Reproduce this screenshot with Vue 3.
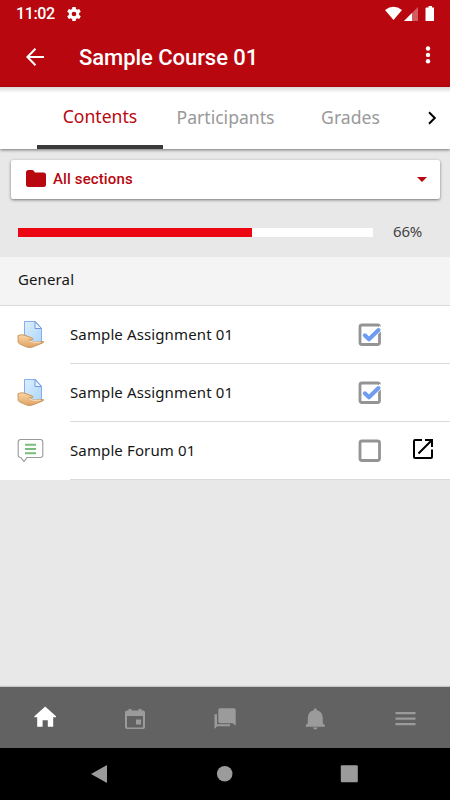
<template>
  <div class="screen">
    <header class="app-header">
      <div class="status-bar">
        <span class="clock">11:02</span>
        <svg class="gear" width="16" height="16" viewBox="0 0 24 24">
          <path fill="#fff" fill-rule="evenodd" d="M19.600 13.500a7.500 7.500 0 0 0 0-3l2.600-1.700-2.400-4.300-3 1.200a8 8 0 0 0-1.900-1.100L14.500 1.500h-5l-.4 3.100a8 8 0 0 0-1.900 1.100l-3-1.200-2.400 4.300 2.600 1.700a7.500 7.500 0 0 0 0 3l-2.600 1.700 2.400 4.300 3-1.200a8 8 0 0 0 1.900 1.100l.4 3.100h5l.4-3.100a8 8 0 0 0 1.900-1.100l3 1.200 2.400-4.300zM12 15.500a3.500 3.500 0 1 1 0-7 3.500 3.500 0 0 1 0 7z" />
        </svg>
        <svg class="signals" width="50" height="16" viewBox="0 0 50 16">
          <path fill="#fff" d="M0 4Q8.500-2.500 17 4L8.500 14z" />
          <path fill="#fff" opacity=".35" d="M33 1v14H19z" />
          <path fill="#fff" d="M27 7v8h-8z" />
          <path fill="#fff" d="M41.500 1.500h2V0H47v1.500h2V15h-8.500V2.500q0-1 1-1z" />
        </svg>
      </div>
      <div class="toolbar">
        <svg width="18" height="18" viewBox="0 0 18 18" fill="none" stroke="#fff" stroke-width="2">
          <path d="M9.500.7 1.400 9l8.100 8.300M1.500 9H18" />
        </svg>
        <h1>Sample Course 01</h1>
        <svg class="more" width="6" height="18" viewBox="0 0 6 18" fill="#fff">
          <circle cx="3" cy="2.500" r="2.200" />
          <circle cx="3" cy="8.900" r="2.200" />
          <circle cx="3" cy="15.300" r="2.200" />
        </svg>
      </div>
    </header>

    <nav class="tabs">
      <button
        v-for="tab in tabs"
        :key="tab"
        class="tab"
        :class="{ active: tab === activeTab }"
        @click="activeTab = tab"
      >{{ tab }}</button>
      <svg class="next" width="10" height="14" viewBox="0 0 10 14" fill="none" stroke="#000" stroke-width="2">
        <path d="m2 1.200 5.800 5.800L2 12.800" />
      </svg>
    </nav>

    <main>
      <div class="section-picker">
        <svg class="folder" width="20" height="17" viewBox="0 0 20 17">
          <path fill="#b90710" d="M0 2.500Q0 0 2.500 0H6q1.200 0 2 1l.8 1.500H17.500Q20 2.500 20 5v9.500Q20 17 17.500 17h-15Q0 17 0 14.500z" />
        </svg>
        <span>All sections</span>
        <svg class="caret" width="10" height="5" viewBox="0 0 10 5">
          <path fill="#b90710" d="M0 0h10L5 5z" />
        </svg>
      </div>

      <div class="progress">
        <div class="progress-track">
          <div class="progress-value" :style="{ width: progress + '%' }"></div>
        </div>
        <span>{{ progress }}%</span>
      </div>

      <h2>General</h2>

      <div v-for="(item, i) in items" :key="i" class="item">
        <svg v-if="item.type === 'assign'" class="item-icon" width="27" height="28" viewBox="0 0 27 28">
          <defs>
            <linearGradient id="paper" x2="1" y2="1">
              <stop stop-color="#dcefff" />
              <stop offset="1" stop-color="#add6fa" />
            </linearGradient>
            <linearGradient id="hand" x2="0" y2="1">
              <stop stop-color="#fbd7a5" />
              <stop offset="1" stop-color="#dfa264" />
            </linearGradient>
          </defs>
          <path fill="url(#paper)" stroke="#85adef" d="M7.500 1.500h11l6 7V23h-17z" />
          <path fill="#e7f4ff" stroke="#7198e7" d="M18 1.500v7h6.500z" />
          <path fill="url(#hand)" stroke="#c38d52" stroke-width=".9" d="M1 15.700c2-.9 4.400-1.200 7-.4l7.200 2.800c1.400.6 1.100 1.500-.2 1.700l-3.300.2 5.500 2.100 8.800-.5c1.200.1.800.8-.3 1.300l-9.600 3.900c-2.600 1-5.300.8-7.600-.2L2.200 23.600C1 22.900 1.200 22 1.100 20.800z" />
          <path fill="none" stroke="#fff0d8" stroke-width=".8" d="m12 20.600 5 1.800 6.500-.2" />
        </svg>
        <svg v-else class="item-icon" width="27" height="28" viewBox="0 0 27 28" fill="none">
          <path fill="#fff" stroke="#999" stroke-width="1.100" d="M3.800 3.500h19.500q2.500 0 2.500 2.500v13q0 2.500-2.500 2.500H10l-3 4.100-3.100-4.100Q1.200 21.500 1.200 19V6Q1.200 3.500 3.800 3.500z" />
          <path stroke="#78bd7b" stroke-width="2" d="M8 8.800h11M8 13h11M8 17.200h11" />
        </svg>
        <div class="item-body">
          <span class="item-name">{{ item.name }}</span>
          <svg class="check" width="24" height="24" viewBox="0 0 24 24" fill="none">
            <rect x="2" y="2" width="19.500" height="19.500" rx="2" stroke="#949494" stroke-width="2.800" />
            <template v-if="item.done">
              <path stroke="#fff" stroke-width="5" d="m7 12 4 4L23.500 4.500" />
              <path stroke="#6e9cf0" stroke-width="4" stroke-linecap="round" stroke-linejoin="round" d="m6.800 12.300 4.200 4L20.500 7" />
            </template>
          </svg>
          <svg v-if="item.external" class="external" width="22" height="22" viewBox="0 0 22 22" fill="none" stroke="#000" stroke-width="2">
            <path d="M10 2H3Q2 2 2 3v16q0 1 1 1h16q1 0 1-1v-7.500M13 2h7v7M19.500 2.500 6.500 15.500" />
          </svg>
        </div>
      </div>
    </main>

    <nav class="bottom-tabs">
      <svg width="26" height="26" viewBox="0 0 26 26" fill="#fff">
        <path d="M13.200 1.500 24 11.300v1h-2.800v9.500h-5.400v-6.500h-5.200v6.500H5.200v-9.500H2.400v-1z" />
      </svg>
      <svg width="26" height="26" viewBox="0 0 26 26" fill="#9b9b9b">
        <path fill-rule="evenodd" d="M6.500 4h3v1.500h7V4h3v1.500H21q2 0 2 2V22q0 2-2 2H5q-2 0-2-2V7.500q0-2 2-2h1.500zM5 11v10.700q0 .8.800.8h14.400q.8 0 .8-.8V11zM14 14.500h5v5h-5z" />
      </svg>
      <svg width="26" height="26" viewBox="0 0 26 26" fill="#9b9b9b">
        <path d="M8 3.300h14q1.700 0 1.700 1.700v15.800l-3-2.500H8q-1.700 0-1.700-1.700V5Q6.300 3.300 8 3.300z" />
        <path d="M2.500 9.200H5v10h13v2H5L2.500 24z" />
      </svg>
      <svg width="26" height="26" viewBox="0 0 26 26" fill="#9b9b9b">
        <path d="M13.300 3.300q1.600 0 1.600 2 5.900 1.400 5.900 8v5l2 2v1.400h-19v-1.400l2-2v-5q0-6.600 5.900-8 0-2 1.600-2zM11 22.500h4.600q-.4 2-2.300 2t-2.300-2z" />
      </svg>
      <svg width="26" height="26" viewBox="0 0 26 26" fill="#9b9b9b">
        <path d="M3.500 7h20v2.200h-20zM3.500 12.500h20v2.200h-20zM3.500 18h20v2.200h-20z" />
      </svg>
    </nav>

    <footer class="system-nav">
      <svg width="18" height="18" viewBox="0 0 18 18"><path d="M17 0v18L1 9z" /></svg>
      <svg width="18" height="18" viewBox="0 0 18 18"><circle cx="9.700" cy="8.700" r="7.800" /></svg>
      <svg width="18" height="18" viewBox="0 0 18 18"><rect x=".8" y=".3" width="17" height="17" rx="1" /></svg>
    </footer>
  </div>
</template>

<script setup>
import { ref } from 'vue'

const tabs = ['Contents', 'Participants', 'Grades']
const activeTab = ref('Contents')
const progress = ref(66)

const items = [
  { name: 'Sample Assignment 01', type: 'assign', done: true },
  { name: 'Sample Assignment 01', type: 'assign', done: true },
  { name: 'Sample Forum 01', type: 'forum', done: false, external: true }
]
</script>

<style>
body {
  margin: 0;
}
</style>

<style scoped>
.screen {
  display: flex;
  flex-direction: column;
  width: 450px;
  height: 800px;
  overflow: hidden;
  background: #e8e8e8;
  font-family: "Noto Sans", sans-serif;
  color: #161616;
}

svg {
  display: block;
  flex-shrink: 0;
}

.app-header {
  height: 87px;
  flex-shrink: 0;
  background: #b90710;
  color: #fff;
  font-family: Roboto, sans-serif;
}

.status-bar {
  display: flex;
  align-items: center;
  height: 27px;
  padding: 0 15px 0 16px;
}

.clock {
  width: 50px;
  font-size: 16px;
  font-weight: 500;
  letter-spacing: -0.35px;
}

.signals {
  margin-left: auto;
}

.toolbar {
  display: flex;
  align-items: center;
  height: 60px;
  padding: 0 19px 0 26px;
}

h1 {
  margin: 0 0 0 35px;
  font-size: 22px;
  font-weight: 500;
  letter-spacing: -0.05px;
}

.more {
  margin: 0 0 4px auto;
}

.tabs {
  display: flex;
  align-items: center;
  height: 62px;
  flex-shrink: 0;
  padding-left: 37px;
  background: linear-gradient(#d9d9d9, #fff 6px);
  box-shadow: 0 1px 3px rgba(0, 0, 0, 0.5);
}

.tab {
  width: 125px;
  height: 62px;
  padding: 0 0 2px;
  border: 0;
  background: none;
  color: #999;
  font-family: inherit;
  font-size: 17.6px;
}

.tab.active {
  width: 126px;
  padding-bottom: 0;
  border-bottom: 4px solid #3a3a3a;
  color: #b90710;
}

.next {
  margin-left: 14px;
}

main {
  flex: 1;
}

.section-picker {
  display: flex;
  align-items: center;
  height: 39px;
  margin: 11px 10px 0 11px;
  padding: 0 13px 0 15px;
  border-radius: 2px;
  background: #fff;
  box-shadow: 0 1px 3px rgba(0, 0, 0, 0.5);
  color: #b90710;
  font-family: Roboto, sans-serif;
  font-size: 15px;
  font-weight: 500;
  letter-spacing: 0.12px;
}

.folder {
  margin-bottom: 2px;
}

.section-picker span {
  margin: 0 0 1px 7px;
}

.caret {
  margin-left: auto;
}

.progress {
  display: flex;
  align-items: center;
  height: 58px;
  padding: 8px 0 0 18px;
  box-sizing: border-box;
  font-size: 15px;
  color: #444;
}

.progress span {
  margin-bottom: 2px;
  letter-spacing: -0.2px;
}

.progress-track {
  width: 355px;
  height: 9px;
  margin-right: 20px;
  background: #fff;
}

.progress-value {
  height: 100%;
  background: #ec0611;
}

h2 {
  height: 48px;
  margin: 0;
  padding-left: 18px;
  border-bottom: 1px solid #dadada;
  background: #f4f4f4;
  font-size: 15px;
  font-weight: 400;
  letter-spacing: 0.12px;
  line-height: 45px;
}

.item {
  display: flex;
  align-items: center;
  height: 58px;
  padding-left: 17px;
  background: #fff;
}

.item-icon {
  margin-bottom: 3px;
}

.item-body {
  display: flex;
  align-items: center;
  flex: 1;
  height: 57px;
  margin-left: 26px;
  border-bottom: 1px solid #dadada;
  font-size: 15px;
  letter-spacing: 0.12px;
}

.item-name {
  width: 288px;
  margin-bottom: 2px;
}

.external {
  margin: 0 0 3px 30px;
}

.bottom-tabs {
  display: grid;
  grid-template-columns: repeat(5, 1fr);
  place-items: center;
  height: 61px;
  flex-shrink: 0;
  background: #626262;
  box-shadow: 0 -1px 1px rgba(0, 0, 0, 0.15);
}

.system-nav {
  display: flex;
  justify-content: space-between;
  align-items: center;
  height: 52px;
  flex-shrink: 0;
  padding: 0 92px 0 90px;
  background: #000;
  fill: #9b9b9b;
}
</style>
